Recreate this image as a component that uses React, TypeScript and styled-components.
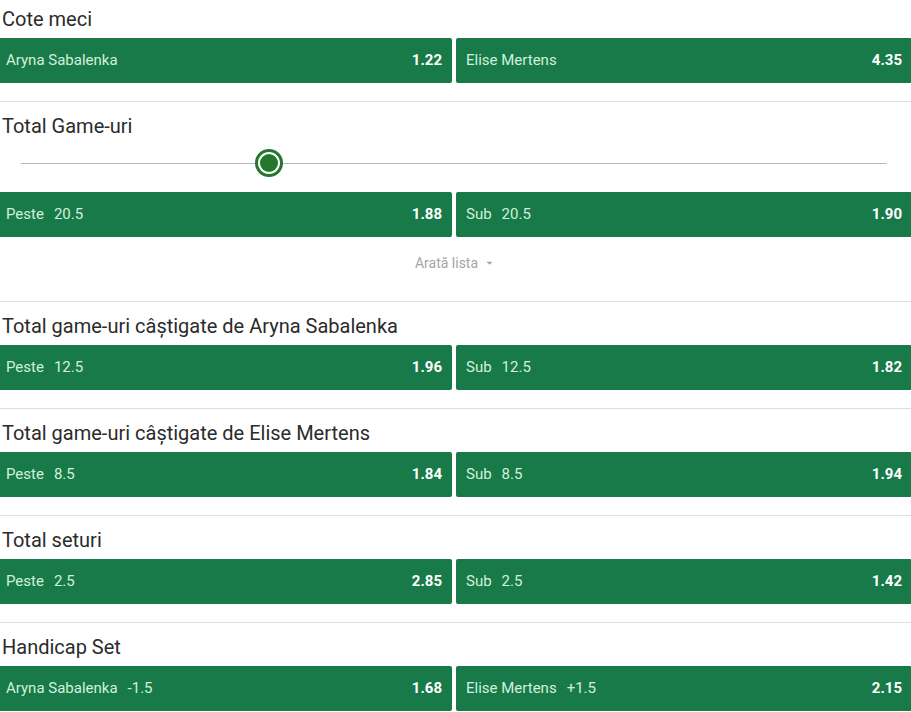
import styled, { createGlobalStyle } from "styled-components";

const GlobalStyle = createGlobalStyle`
    html, body {
        margin: 0;
        padding: 0;
        background: #ffffff;
        overflow: hidden;
    }
    body {
        font-family: Roboto, "Liberation Sans", Arial, sans-serif;
    }
`;

type Pick = { label: string; line?: string; odds: string };
type Market = { title: string; picks: [Pick, Pick]; slider?: number; showMore?: boolean };

const markets: Market[] = [
    {
        title: "Cote meci",
        picks: [
            { label: "Aryna Sabalenka", odds: "1.22" },
            { label: "Elise Mertens", odds: "4.35" },
        ],
    },
    {
        title: "Total Game-uri",
        slider: 28.6,
        showMore: true,
        picks: [
            { label: "Peste", line: "20.5", odds: "1.88" },
            { label: "Sub", line: "20.5", odds: "1.90" },
        ],
    },
    {
        title: "Total game-uri câștigate de Aryna Sabalenka",
        picks: [
            { label: "Peste", line: "12.5", odds: "1.96" },
            { label: "Sub", line: "12.5", odds: "1.82" },
        ],
    },
    {
        title: "Total game-uri câștigate de Elise Mertens",
        picks: [
            { label: "Peste", line: "8.5", odds: "1.84" },
            { label: "Sub", line: "8.5", odds: "1.94" },
        ],
    },
    {
        title: "Total seturi",
        picks: [
            { label: "Peste", line: "2.5", odds: "2.85" },
            { label: "Sub", line: "2.5", odds: "1.42" },
        ],
    },
    {
        title: "Handicap Set",
        picks: [
            { label: "Aryna Sabalenka", line: "-1.5", odds: "1.68" },
            { label: "Elise Mertens", line: "+1.5", odds: "2.15" },
        ],
    },
];

export default function App() {
    return (
        <>
            <GlobalStyle />
            <Page>
                {markets.map((m) => (
                    <Section key={m.title}>
                        <Title>{m.title}</Title>
                        {m.slider !== undefined && (
                            <SliderRow>
                                <Track>
                                    <Knob style={{ left: `${m.slider}%` }}>
                                        <KnobDot />
                                    </Knob>
                                </Track>
                            </SliderRow>
                        )}
                        <Picks>
                            {m.picks.map((p) => (
                                <PickButton key={p.label + p.odds}>
                                    <PickLabel>
                                        {p.label}
                                        {p.line && <PickLine>{p.line}</PickLine>}
                                    </PickLabel>
                                    <Odds>{p.odds}</Odds>
                                </PickButton>
                            ))}
                        </Picks>
                        {m.showMore && (
                            <ShowMore>
                                Arată lista
                                <Caret viewBox="0 0 8 5">
                                    <path d="M0.5 0.5 L4 4 L7.5 0.5 Z" fill="#a6a6a6" />
                                </Caret>
                            </ShowMore>
                        )}
                    </Section>
                ))}
            </Page>
        </>
    );
}

const Page = styled.div`
    width: 916px;
    margin: -5px 0 0 -4px;
    display: flex;
    flex-direction: column;
`;

const Section = styled.section`
    padding: 12px 0 18px;
    border-bottom: 1px solid #dddddd;
`;

const Title = styled.h2`
    margin: 0 0 7px 6px;
    font-size: 20px;
    line-height: 24px;
    font-weight: 400;
    color: #2b2b2b;
`;

const SliderRow = styled.div`
    height: 47px;
    margin: -7px 0 7px;
    padding: 0 25px;
    display: flex;
    align-items: center;
`;

const Track = styled.div`
    position: relative;
    flex: 1;
    height: 1px;
    background: #b8b8b8;
    margin-top: 3px;
`;

const Knob = styled.div`
    position: absolute;
    top: -14px;
    width: 22px;
    height: 22px;
    margin-left: -14px;
    border: 3px solid #23782c;
    border-radius: 50%;
    background: #ffffff;
    display: flex;
    align-items: center;
    justify-content: center;
`;

const KnobDot = styled.div`
    width: 18px;
    height: 18px;
    border-radius: 50%;
    background: #23782c;
`;

const Picks = styled.div`
    display: grid;
    grid-template-columns: 1fr 1fr;
    gap: 4px;
`;

const PickButton = styled.div`
    height: 45px;
    padding: 0 10px;
    display: flex;
    align-items: center;
    justify-content: space-between;
    background: #177a48;
    border-radius: 2px;
`;

const PickLabel = styled.span`
    font-size: 15px;
    color: #d3f0dc;
    white-space: nowrap;
    margin-top: -2px;
`;

const PickLine = styled.span`
    margin-left: 10px;
`;

const Odds = styled.span`
    font-size: 15px;
    font-weight: 700;
    color: #ffffff;
    margin-top: -1px;
`;

const ShowMore = styled.div`
    height: 40px;
    padding-top: 6px;
    display: flex;
    align-items: center;
    justify-content: center;
    gap: 8px;
    font-size: 14px;
    color: #a6a6a6;
`;

const Caret = styled.svg`
    width: 7px;
    height: 5px;
`;
